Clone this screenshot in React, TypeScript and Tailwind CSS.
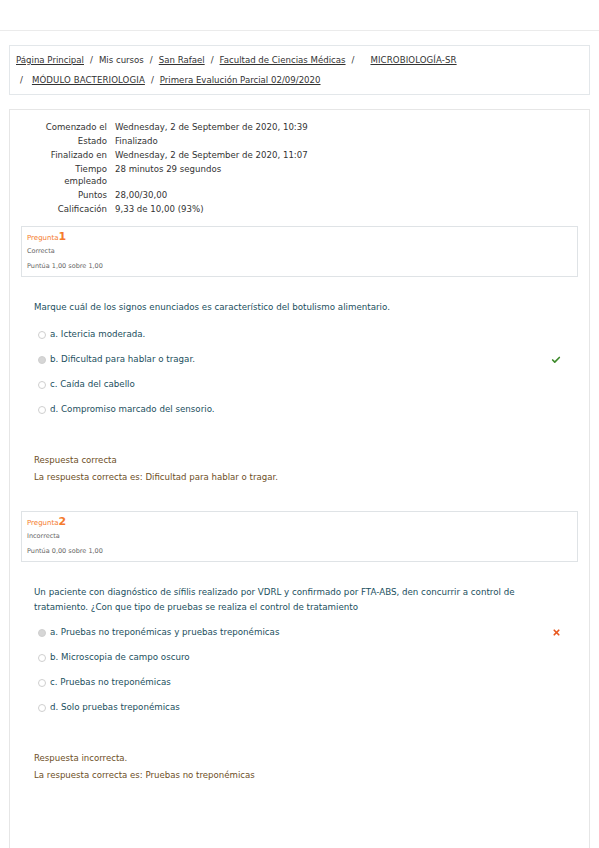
import { Check, X } from 'lucide-react'

const crumbs = [
	{ t: 'Página Principal', link: true, cls: '' },
	{ t: 'Mis cursos', link: false, cls: '' },
	{ t: 'San Rafael', link: true, cls: '' },
	{ t: 'Facultad de Ciencias Médicas', link: true, cls: '' },
	{ t: 'MICROBIOLOGÍA-SR', link: true, cls: 'ml-[10px] tracking-[0.1px]' },
]

const summary = [
	['Comenzado el', 'Wednesday, 2 de September de 2020, 10:39'],
	['Estado', 'Finalizado'],
	['Finalizado en', 'Wednesday, 2 de September de 2020, 11:07'],
	['Tiempo empleado', '28 minutos 29 segundos'],
	['Puntos', '28,00/30,00'],
	['Calificación', '9,33 de 10,00 (93%)'],
]

type Q = {
	n: number
	state: string
	score: string
	text: string[]
	options: string[]
	picked: number
	ok: boolean
	feedback: string
	answer: string
	optsTop: string
}

const questions: Q[] = [
	{
		n: 1,
		state: 'Correcta',
		score: 'Puntúa 1,00 sobre 1,00',
		text: ['Marque cuál de los signos enunciados es característico del botulismo alimentario.'],
		options: ['a. Ictericia moderada.', 'b. Dificultad para hablar o tragar.', 'c. Caída del cabello', 'd. Compromiso marcado del sensorio.'],
		picked: 1,
		ok: true,
		feedback: 'Respuesta correcta',
		answer: 'La respuesta correcta es: Dificultad para hablar o tragar.',
		optsTop: 'mt-[7px]',
	},
	{
		n: 2,
		state: 'Incorrecta',
		score: 'Puntúa 0,00 sobre 1,00',
		text: [
			'Un paciente con diagnóstico de sífilis realizado por VDRL y confirmado por FTA-ABS, den concurrir a control de',
			'tratamiento. ¿Con que tipo de pruebas se realiza el control de tratamiento',
		],
		options: ['a. Pruebas no treponémicas y pruebas treponémicas', 'b. Microscopia de campo oscuro', 'c. Pruebas no treponémicas', 'd. Solo pruebas treponémicas'],
		picked: 0,
		ok: false,
		feedback: 'Respuesta incorrecta.',
		answer: 'La respuesta correcta es: Pruebas no treponémicas',
		optsTop: 'mt-[5px]',
	},
]

const Question = ({ q }: { q: Q }) => (
	<div className="flex flex-col">
		<div className="flex flex-col border border-[#dfe3e6] px-[5px] pt-[3px] pb-[3px] h-[51px] text-[6.5px] text-[#666]">
			<div className="flex items-end h-[17px] text-[#f57b2c]">
				<span className="text-[7px] leading-[12px]">Pregunta</span>
				<span className="text-[11px] font-bold leading-[14px]">{q.n}</span>
			</div>
			<div className="leading-[15px]">{q.state}</div>
			<div className="leading-[15px]">{q.score}</div>
		</div>
		<div className="flex flex-col px-[13px] mt-[23px] text-[8.7px] text-[#1b4f5e]">
			{q.text.map((l) => (
				<div key={l} className="leading-[15px]">{l}</div>
			))}
			<div className={'flex flex-col ' + q.optsTop}>
				{q.options.map((o, i) => (
					<div key={o} className="flex items-center h-[25px] pl-[4px] pr-[4px]">
						<span
							className={
								'w-[8px] h-[8px] rounded-full border border-[#cfcfcf] mr-[4px] ' +
								(i === q.picked ? 'bg-[#d6d6d6]' : 'bg-white')
							}
						/>
						<span className="flex-1">{o}</span>
						{i === q.picked &&
							(q.ok ? (
								<Check size={10} strokeWidth={4} className="text-[#3d8a2a]" />
							) : (
								<X size={9} strokeWidth={4.5} className="text-[#e8581f]" />
							))}
					</div>
				))}
			</div>
			<div className="flex flex-col mt-[30px] text-[8.6px] text-[#6e4f1f]">
				<div className="leading-[17px]">{q.feedback}</div>
				<div className="leading-[17px]">{q.answer}</div>
			</div>
		</div>
	</div>
)

export default function App() {
	return (
		<div className="w-[599px] min-h-[848px] bg-white font-['DejaVu_Sans',sans-serif] text-[#333]">
			<div className="h-[31px] border-b border-[#ebebeb]" />
			<div className="flex flex-col px-[9px] pt-[14px] gap-[14px]">
				<div className="flex flex-col border border-[#e3e7ea] px-[6px] py-[4px] text-[8.6px] text-[#333]">
					<div className="flex items-center h-[20px] gap-[6px]">
						{crumbs.map((c, i) => (
							<span key={c.t} className="flex gap-[6px]">
								<span className={(c.link ? 'underline ' : '') + c.cls}>{c.t}</span>
								{i < crumbs.length - 1 && <span>/</span>}
							</span>
						))}
					</div>
					<div className="flex items-center h-[20px] gap-[6px] pl-[4px]">
						<span>/</span>
						<span className="underline tracking-[0.1px] ml-[3px]">MÓDULO BACTERIOLOGIA</span>
						<span>/</span>
						<span className="underline">Primera Evalución Parcial 02/09/2020</span>
					</div>
				</div>
				<div className="flex flex-col border border-[#e6e6e6] border-b-0 px-[11px] pt-[11px] min-h-[760px]">
					<div className="grid grid-cols-[86px_1fr] gap-x-[8px] gap-y-[2px] text-[8.6px] leading-[12px] text-[#333]">
						{summary.map(([k, v]) => (
							<div key={k} className="contents">
								<div className="text-right pl-[10px]">{k}</div>
								<div>{v}</div>
							</div>
						))}
					</div>
					<div className="flex flex-col mt-[11px] gap-[25px]">
						{questions.map((q) => (
							<Question key={q.n} q={q} />
						))}
					</div>
				</div>
			</div>
		</div>
	)
}
